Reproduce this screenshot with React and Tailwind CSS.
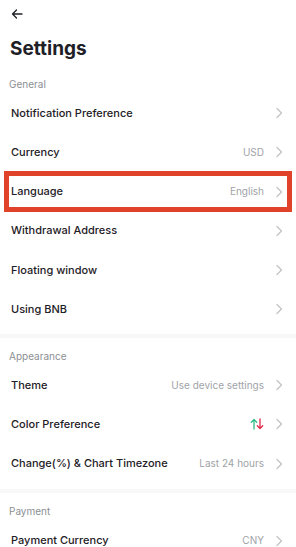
import React from "react";

const Chevron = () => (
  <svg width="8" height="12" viewBox="0 0 8 12" fill="none" className="shrink-0">
    <path d="M2 1.5 L6.5 6 L2 10.5" stroke="#c4c4c4" strokeWidth="1.3" strokeLinecap="round" strokeLinejoin="round" />
  </svg>
);

const Arrows = () => (
  <svg width="14" height="12" viewBox="0 0 14 12" fill="none">
    <path d="M4 11 V1.5 M1.3 4.2 L4 1.5 L6.7 4.2" stroke="#2ebd85" strokeWidth="1.3" strokeLinecap="round" strokeLinejoin="round" />
    <path d="M10 1 V10.5 M7.3 7.8 L10 10.5 L12.7 7.8" stroke="#e0294a" strokeWidth="1.3" strokeLinecap="round" strokeLinejoin="round" />
  </svg>
);

function Row({ label, value, icon, highlight }) {
  return (
    <div
      className={
        highlight
          ? "flex items-center justify-between mx-[4px] border-[5px] border-[#e0432a] pl-[2px] pr-[4px] h-[41px] -my-[1px]"
          : "flex items-center justify-between h-[39.3px] pl-[11px] pr-[13px]"
      }
    >
      <span className="text-[11px] font-medium text-[#1e2026]">{label}</span>
      <div className="flex items-center gap-[11px]">
        {value && <span className="text-[10px] text-[#a0a3a8]">{value}</span>}
        {icon}
        <Chevron />
      </div>
    </div>
  );
}

function Section({ title, children }) {
  return (
    <div>
      <div className="pl-[9px] pt-[11px] pb-[1.5px] text-[10px] text-[#8c8f94]">{title}</div>
      {children}
    </div>
  );
}

export default function App() {
  return (
    <div
      className="w-[296px] h-[547px] bg-white overflow-hidden"
      style={{ fontFamily: "Inter, 'Liberation Sans', sans-serif" }}
    >
      <div className="pl-[11px] pt-[8px] h-[26px]">
        <svg width="12" height="12" viewBox="0 0 12 12" fill="none">
          <path d="M11 6 H1.5 M5.5 2 L1.5 6 L5.5 10" stroke="#1e2026" strokeWidth="1.3" strokeLinecap="round" strokeLinejoin="round" />
        </svg>
      </div>
      <div className="pl-[10px] pt-[11px] pb-[5px] text-[19px] font-bold text-[#1e2026] leading-[24px]">Settings</div>
      <Section title="General">
        <Row label="Notification Preference" />
        <Row label="Currency" value="USD" />
        <Row label="Language" value="English" highlight />
        <Row label="Withdrawal Address" />
        <Row label="Floating window" />
        <Row label="Using BNB" />
      </Section>
      <div className="h-[4px] bg-[#f8f8f8] mt-[5px]" />
      <Section title="Appearance">
        <Row label="Theme" value="Use device settings" />
        <Row label="Color Preference" icon={<Arrows />} />
        <Row label="Change(%) & Chart Timezone" value="Last 24 hours" />
      </Section>
      <div className="h-[4px] bg-[#f8f8f8] mt-[6px]" />
      <Section title="Payment">
        <Row label="Payment Currency" value="CNY" />
      </Section>
    </div>
  );
}
